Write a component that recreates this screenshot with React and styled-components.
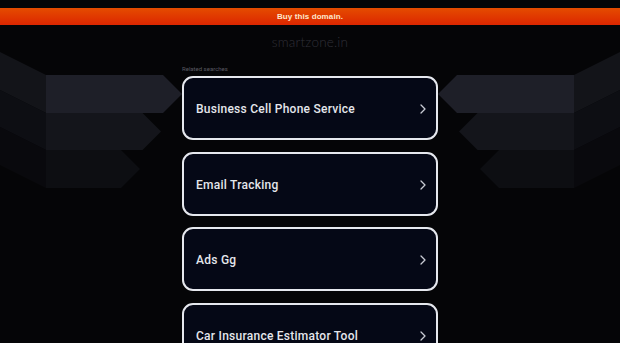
import React from "react";
import styled, { createGlobalStyle } from "styled-components";

const Global = createGlobalStyle`
  html, body { margin: 0; padding: 0; background: #050507; }
  * { box-sizing: border-box; }
`;

const Page = styled.div`
  position: relative;
  min-height: 100vh;
  overflow: hidden;
  background: #050507;
  font-family: Roboto, "Liberation Sans", sans-serif;
`;

const Decor = styled.svg`
  position: absolute;
  top: 0;
  ${(p) => (p.$side === "right" ? "right: 0; transform: scaleX(-1);" : "left: 0;")}
  width: 190px;
  height: 200px;
  z-index: 0;
`;

const Layer = styled.div`
  position: relative;
  z-index: 1;
  padding-top: 8px;
`;

const BuyBar = styled.div`
  height: 17px;
  display: flex;
  align-items: center;
  justify-content: center;
  background: linear-gradient(#e54c00, #dc2600);
  color: #fde8cc;
  font-family: "Liberation Sans", Arial, sans-serif;
  font-weight: 700;
  font-size: 8px;
  letter-spacing: 0.1px;
`;

const DomainTitle = styled.div`
  text-align: center;
  line-height: 34px;
  font-family: Lato, "Open Sans", sans-serif;
  font-weight: 300;
  font-size: 13.5px;
  letter-spacing: 0.2px;
  color: #303038;
`;

const Main = styled.main`
  width: 256px;
  margin: 0 auto;
`;

const Label = styled.div`
  margin-top: 6px;
  margin-bottom: 3px;
  line-height: 8px;
  font-size: 6px;
  color: #5a5a62;
`;

const List = styled.div`
  display: flex;
  flex-direction: column;
  gap: 11.7px;
`;

const Card = styled.a`
  display: flex;
  align-items: center;
  justify-content: space-between;
  height: 64px;
  padding: 2px 10px 0 12px;
  border: 2px solid #e6e8ee;
  border-radius: 11px;
  background: #050816;
  color: #e4e6ec;
  text-decoration: none;
  font-size: 12px;
  font-weight: 500;
  letter-spacing: 0.25px;
`;

const Chevron = () => (
  <svg width="6" height="10" viewBox="0 0 6 10">
    <path d="M1 1 L5 5 L1 9" fill="none" stroke="#c9cbd4" strokeWidth="1.3" strokeLinecap="round" strokeLinejoin="round" />
  </svg>
);

const Shapes = () => (
  <>
    <polygon points="0,52 46,75 46,113 0,90" fill="#131419" />
    <polygon points="46,75 163,75 182,94 163,113 46,113" fill="#1e1f28" />
    <polygon points="0,90 46,113 46,150 0,127" fill="#0d0e13" />
    <polygon points="46,113 142.5,113 161,131.5 142.5,150 46,150" fill="#14151b" />
    <polygon points="0,127 46,150 46,188 0,165" fill="#09090d" />
    <polygon points="46,150 121,150 140,169 121,188 46,188" fill="#0d0e12" />
  </>
);

const items = [
  "Business Cell Phone Service",
  "Email Tracking",
  "Ads Gg",
  "Car Insurance Estimator Tool",
];

export default function App() {
  return (
    <Page>
      <Global />
      <Decor $side="left" viewBox="0 0 190 200"><Shapes /></Decor>
      <Decor $side="right" viewBox="0 0 190 200"><Shapes /></Decor>
      <Layer>
        <BuyBar>Buy this domain.</BuyBar>
        <DomainTitle>smartzone.in</DomainTitle>
        <Main>
          <Label>Related searches</Label>
          <List>
            {items.map((t) => (
              <Card key={t} href="#">
                <span>{t}</span>
                <Chevron />
              </Card>
            ))}
          </List>
        </Main>
      </Layer>
    </Page>
  );
}
